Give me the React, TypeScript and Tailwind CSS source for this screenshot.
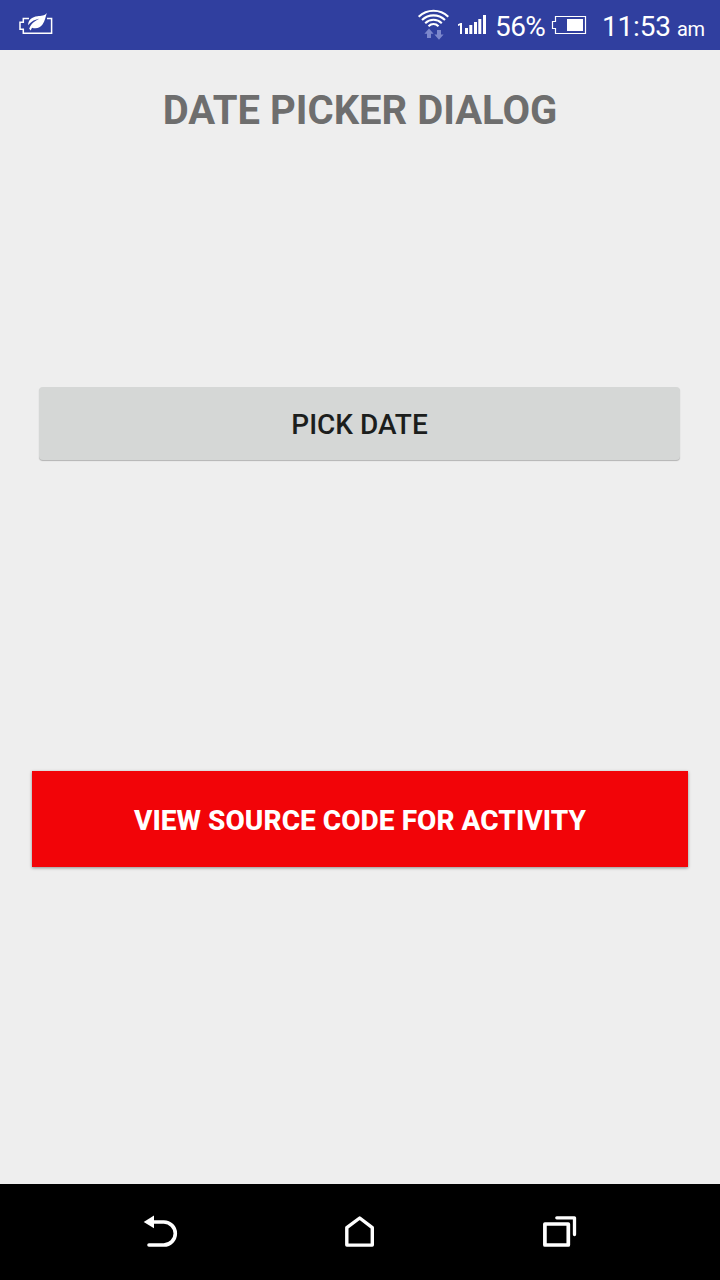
function PowerSaverIcon() {
  return (
    <svg className="h-6 w-9 shrink-0" viewBox="18 13 36 24" fill="none">
      <path d="M29 18.6H23.3V22.3H20V29.3H23.3V33.2H51.6V18.6H47" stroke="#fff" strokeWidth="1.5" />
      <path d="M46.8 13C44.6 15.8 41 15.9 37.5 16.2C32 16.8 28 19.8 28.2 25.2C31.6 20.8 35.5 19.6 39.4 18.8C35 20.9 31 23.5 29.2 28.8L30.7 30.4L32 27.7C36.4 29 40.3 27.8 42.5 24.6C45 21 45.7 16.7 46.8 13Z" fill="#fff" />
    </svg>
  );
}

function WifiIcon() {
  return (
    <svg className="h-8 w-8 shrink-0" viewBox="417 9 32 32" fill="none">
      <g stroke="#fff" strokeWidth="2.1">
        <path d="M418.7 16.7C427 8.8 440 8.8 448.3 16.7" />
        <path d="M422 20C428.5 13.8 438.5 13.8 445 20" />
        <path d="M425.2 23.2C430 18.6 437 18.6 441.8 23.2" />
        <path d="M428.5 26.2C431.5 23.4 435.5 23.4 438.5 26.2" />
      </g>
      <path d="M429 28.6L433.6 33.8H431V38H427V33.8H424.4Z" fill="#7c87cc" />
      <path d="M439 39.8L443.6 34.6H441V30H437V34.6H434.4Z" fill="#7c87cc" />
    </svg>
  );
}

function SignalIcon() {
  return (
    <svg className="ml-2 h-5 w-[30px] shrink-0" viewBox="457 15 30 20" fill="#fff">
      <path d="M458 24.3L460.6 23H462V34H460V25.3L458 26Z" />
      <path d="M465 28H468V34H465ZM469.3 25H472.3V34H469.3ZM474 22H477V34H474ZM478.3 19H481.3V34H478.3ZM483 15H486V34H483Z" />
    </svg>
  );
}

function BatteryIcon() {
  return (
    <svg className="h-5 w-9 shrink-0" viewBox="551 15 36 20" fill="none">
      <path d="M555.5 16.5H585.5V33.5H555.5V28.5H552.5V21.5H555.5Z" stroke="#fff" strokeWidth="1.2" />
      <path d="M567 19H583V31H567Z" fill="#fff" />
    </svg>
  );
}

function BackIcon() {
  return (
    <svg className="h-10 w-10" viewBox="140 1212 40 40" fill="none">
      <path d="M153 1222H163.8A11.4 11.4 0 0 1 163.8 1245H149" stroke="#fff" strokeWidth="3.6" strokeLinecap="round" />
      <path d="M143.7 1222L154 1215.6V1228.3Z" fill="#fff" />
    </svg>
  );
}

function HomeIcon() {
  return (
    <svg className="h-10 w-10" viewBox="340 1212 40 40" fill="none">
      <path d="M346.8 1227.7L359.7 1218L372.3 1227.7V1245.1H346.8Z" stroke="#fff" strokeWidth="3.4" strokeLinejoin="round" />
    </svg>
  );
}

function RecentsIcon() {
  return (
    <svg className="h-10 w-10" viewBox="540 1212 40 40" fill="none" stroke="#fff" strokeLinejoin="round">
      <path d="M544.9 1224H568.3V1245H544.9Z" strokeWidth="3.7" />
      <path d="M556.8 1217.8H574.5V1234.5" strokeWidth="3.3" strokeLinecap="round" />
    </svg>
  );
}

export default function App() {
  return (
    <div className="flex h-[1280px] w-[720px] flex-col bg-[#eeeeee] font-[Roboto,sans-serif]">
      <header className="flex h-[50px] shrink-0 items-center bg-[#303f9f] pl-[18px] text-white">
        <PowerSaverIcon />
        <div className="ml-auto flex items-center">
          <WifiIcon />
          <SignalIcon />
          <span className="ml-2 w-14 pt-[3px] text-[28px] leading-8 tracking-[-0.6px]">56%</span>
          <BatteryIcon />
          <span className="ml-[15px] w-[118px] pt-[5px] text-[28px] leading-8 whitespace-nowrap">
            <span className="inline-block w-[75px] tracking-[-0.2px]">11:53</span>
            <span className="text-[20px] tracking-[-0.3px]">am</span>
          </span>
        </div>
      </header>

      <main className="flex flex-1 flex-col px-8">
        <h1 className="mt-[37px] text-center text-[40px] leading-[48px] font-bold text-[#6e6e6e]">DATE PICKER DIALOG</h1>
        <button className="mr-2 ml-[7px] mt-[252px] h-[73px] rounded-[4px] bg-[#d5d7d6] pt-[2px] text-[28px] leading-8 font-medium text-[#1c1e1d] shadow-[0_1px_1px_rgba(0,0,0,0.25)]">
          PICK DATE
        </button>
        <button className="mt-[311px] h-24 bg-[#f20408] pt-[3px] text-[28px] leading-8 font-extrabold tracking-[0.06px] text-white shadow-[0_1px_3px_rgba(0,0,0,0.4)]">
          VIEW SOURCE CODE FOR ACTIVITY
        </button>
      </main>

      <nav className="flex h-24 shrink-0 items-center justify-center gap-40 bg-black">
        <BackIcon />
        <HomeIcon />
        <RecentsIcon />
      </nav>
    </div>
  );
}
